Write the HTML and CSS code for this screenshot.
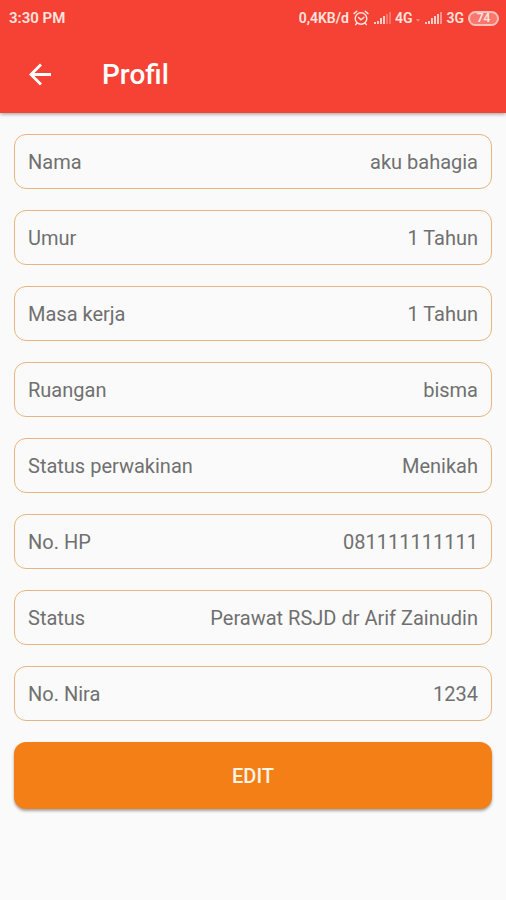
FILE: index.html
```html
<!DOCTYPE html>
<html lang="id">
<head>
<meta charset="utf-8">
<meta name="viewport" content="width=device-width, initial-scale=1">
<title>Profil</title>
<link rel="stylesheet" href="styles.css">
</head>
<body>
<header class="app-header">
  <div class="status-bar">
    <span class="clock">3:30 PM</span>
    <div class="indicators">
      <span>0,4KB/d</span>
      <svg class="alarm" viewBox="0 0 16 16" width="16" height="16" aria-hidden="true">
        <g fill="none" stroke="currentColor" stroke-width="1.4" stroke-linecap="round">
          <circle cx="8" cy="8.5" r="5.8"/>
          <path d="M1 3.600 3.800 1.200M15 3.600 12.200 1.200M5.500 7.500 8 9.800l3-2.600M3.800 13.200 2.600 14.600M12.200 13.200l1.200 1.400"/>
        </g>
      </svg>
      <svg class="signal" viewBox="0 0 18 12" width="18" height="12" aria-hidden="true">
        <path fill="currentColor" opacity=".85" d="M1 10h2v2H1zM4 9h2v3H4zM7 6h2v6H7zM10 4h2v8h-2z"/>
        <path fill="currentColor" opacity=".3" d="M13 2h2v10h-2zM16 0h2v12h-2z"/>
      </svg>
      <span>4G</span>
      <svg class="data" viewBox="0 0 4 12" width="4" height="12" aria-hidden="true">
        <path fill="currentColor" opacity=".4" d="M0 7h4L2 10z"/>
      </svg>
      <svg class="signal" viewBox="0 0 18 12" width="18" height="12" aria-hidden="true">
        <path fill="currentColor" opacity=".85" d="M1 10h2v2H1zM4 9h2v3H4zM7 6h2v6H7zM10 4h2v8h-2zM13 2h2v10h-2z"/>
        <path fill="currentColor" opacity=".5" d="M16 0h2v12h-2z"/>
      </svg>
      <span>3G</span>
      <span class="battery">74</span>
    </div>
  </div>
  <div class="toolbar">
    <button class="back" type="button" aria-label="Kembali">
      <svg viewBox="0 0 24 24" width="24" height="24" aria-hidden="true">
        <path fill="none" stroke="currentColor" stroke-width="2.8" d="M23 11.500H3M13 1.500 3 11.500l10 10"/>
      </svg>
    </button>
    <h1 class="title">Profil</h1>
  </div>
</header>
<main class="content">
  <dl class="fields">
    <div class="field"><dt>Nama</dt><dd>aku bahagia</dd></div>
    <div class="field"><dt>Umur</dt><dd>1 Tahun</dd></div>
    <div class="field"><dt>Masa kerja</dt><dd>1 Tahun</dd></div>
    <div class="field"><dt>Ruangan</dt><dd>bisma</dd></div>
    <div class="field"><dt>Status perwakinan</dt><dd>Menikah</dd></div>
    <div class="field"><dt>No. HP</dt><dd>081111111111</dd></div>
    <div class="field"><dt>Status</dt><dd>Perawat RSJD dr Arif Zainudin</dd></div>
    <div class="field"><dt>No. Nira</dt><dd>1234</dd></div>
  </dl>
  <button class="edit" type="button">EDIT</button>
</main>
</body>
</html>
```
FILE: styles.css
```css
* {
  box-sizing: border-box;
}

body {
  margin: 0;
  min-height: 100vh;
  background: #fafafa;
  color: #707070;
  font-family: Roboto, "Liberation Sans", sans-serif;
  font-size: 20px;
  line-height: 24px;
}

.app-header {
  background: #f64235;
  color: #fff;
  box-shadow: 0 1px 4px rgba(0, 0, 0, 0.4);
}

.status-bar {
  display: flex;
  align-items: center;
  justify-content: space-between;
  height: 36px;
  padding: 0 7px 0 9px;
  color: #ffe4df;
  font-size: 15px;
  font-weight: 600;
  line-height: 16px;
}

.indicators {
  display: flex;
  align-items: center;
  gap: 4px;
  font-size: 14px;
}

.battery {
  width: 31px;
  border: 2px solid #fbc0b9;
  border-radius: 8px;
  background: #f9776c;
  font-size: 12px;
  line-height: 11px;
  text-align: center;
}

.toolbar {
  display: flex;
  align-items: center;
  gap: 50px;
  height: 77px;
  padding: 0 28px;
}

.back {
  display: flex;
  padding: 0;
  border: 0;
  background: none;
  color: #fff;
}

.title {
  margin: 0;
  font-size: 28px;
  font-weight: 500;
  line-height: 32px;
}

.content {
  padding: 21px 14px;
}

.fields {
  display: grid;
  gap: 21px;
  margin: 0 0 21px;
}

.field {
  display: flex;
  align-items: center;
  justify-content: space-between;
  min-height: 55px;
  padding: 0 13px;
  border: 1px solid #e5b67e;
  border-radius: 12px;
}

.field dd {
  margin: 0;
  text-align: right;
}

.edit {
  display: block;
  width: 100%;
  height: 67px;
  border: 0;
  border-radius: 12px;
  background: #f57f17;
  box-shadow: 0 2px 3px rgba(0, 0, 0, 0.35);
  color: #fff4e8;
  font: 500 20px/24px Roboto, "Liberation Sans", sans-serif;
}
```
